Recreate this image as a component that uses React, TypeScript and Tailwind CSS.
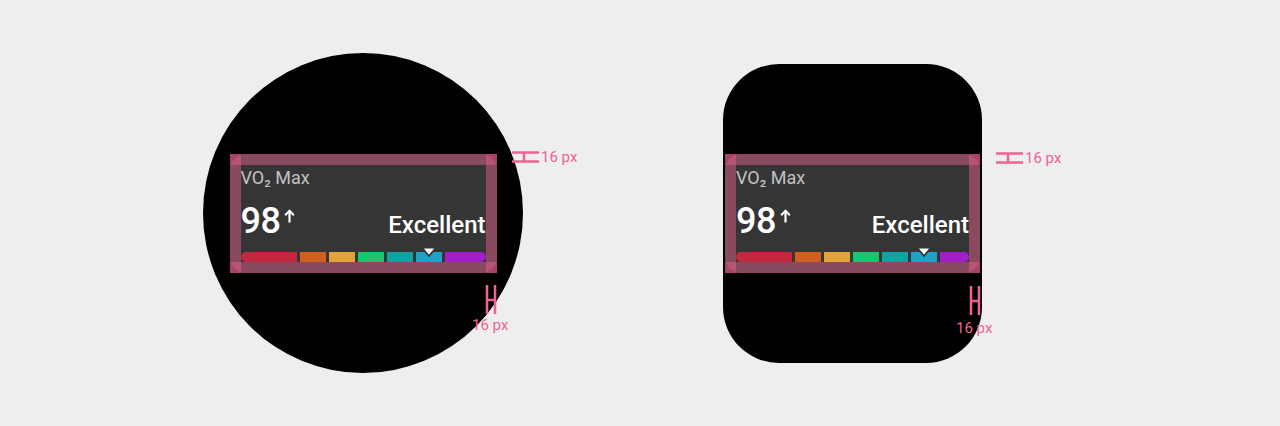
import React from "react";

const font = { fontFamily: "Roboto, 'Noto Sans', sans-serif" };

function Bar() {
  return (
    <div className="flex h-[10px] gap-[3px]">
      <div className="w-[56px] bg-[#c4283f] rounded-l-full" />
      <div className="w-[26px] bg-[#d25e1e]" />
      <div className="w-[26px] bg-[#e2a33b]" />
      <div className="w-[26px] bg-[#1cc46e]" />
      <div className="w-[26px] bg-[#12a0a0]" />
      <div className="relative w-[26px] bg-[#22a0c8]">
        <svg
          className="absolute left-1/2 -translate-x-1/2 top-[-6px]"
          width="17"
          height="12"
          viewBox="0 0 17 12"
        >
          <path d="M1.5 1.5 L15.5 1.5 L8.5 10 Z" fill="#ffffff" stroke="#353535" strokeWidth="1.8" strokeLinejoin="round" />
        </svg>
      </div>
      <div className="flex-1 bg-[#a11ec8] rounded-r-full" />
    </div>
  );
}

function Card({ w }: { w: string }) {
  return (
    <div className={`relative ${w} h-[119px] rounded-[16px] bg-[#353535] flex flex-col px-[11px] pt-[13px] pb-[11px]`}>
      <div className="text-[18px] leading-[21px] text-[#c2c2c2]">VO₂ Max</div>
      <div className="mt-[15px] h-[36px] flex items-baseline justify-between text-white">
        <div className="flex items-start">
          <span className="text-[36px] leading-none font-medium tracking-[-0.5px]">98</span>
          <svg className="ml-[4px] mt-[6px]" width="11" height="14" viewBox="0 0 11 14" fill="none">
            <path d="M5.5 13.5 V2" stroke="#ffffff" strokeWidth="2.2" />
            <path d="M1.2 6.2 L5.5 1.8 L9.8 6.2" stroke="#ffffff" strokeWidth="2.2" strokeLinejoin="miter" />
          </svg>
        </div>
        <span className="text-[24px] leading-none font-medium">Excellent</span>
      </div>
      <div className="mt-auto">
        <Bar />
      </div>
      <div className="absolute left-0 right-0 top-0 h-[11px] bg-[#f06292]/45" />
      <div className="absolute left-0 right-0 bottom-0 h-[11px] bg-[#f06292]/45" />
      <div className="absolute left-0 top-0 bottom-0 w-[11px] bg-[#f06292]/45" />
      <div className="absolute right-0 top-0 bottom-0 w-[11px] bg-[#f06292]/45" />
    </div>
  );
}

function HMarkH({ className }: { className: string }) {
  return (
    <svg className={className} width="27" height="12" viewBox="0 0 27 12" fill="none">
      <path d="M0 1.5 H27 M0 10.5 H27 M12 1.5 V10.5" stroke="#f06292" strokeWidth="2.5" />
    </svg>
  );
}

function HMarkV({ className }: { className: string }) {
  return (
    <svg className={className} width="12" height="29" viewBox="0 0 12 29" fill="none">
      <path d="M2 0 V29 M10 0 V29 M2 15 H10" stroke="#f06292" strokeWidth="2.5" />
    </svg>
  );
}

const lbl = "absolute whitespace-nowrap text-[15px] leading-[18px] text-[#f06292]";

export default function App() {
  return (
    <div
      className="w-[1280px] h-[426px] bg-[#eeeeee] flex items-center pl-[203px] gap-[200px] overflow-hidden"
      style={font}
    >
      <div className="relative w-[320px] h-[320px] rounded-full bg-black flex items-center justify-center shrink-0">
        <Card w="w-[267px]" />
        <HMarkH className="absolute left-[309px] top-[98px]" />
        <span className={`${lbl} left-[338px] top-[95px]`}>16 px</span>
        <HMarkV className="absolute left-[282px] top-[232px]" />
        <span className={`${lbl} left-[269px] top-[263px]`}>16 px</span>
      </div>
      <div className="relative w-[259px] h-[299px] rounded-[56px] bg-black flex items-center justify-center shrink-0">
        <Card w="w-[255px]" />
        <HMarkH className="absolute left-[273px] top-[88px]" />
        <span className={`${lbl} left-[302px] top-[85px]`}>16 px</span>
        <HMarkV className="absolute left-[246px] top-[222px]" />
        <span className={`${lbl} left-[233px] top-[255px]`}>16 px</span>
      </div>
    </div>
  );
}
